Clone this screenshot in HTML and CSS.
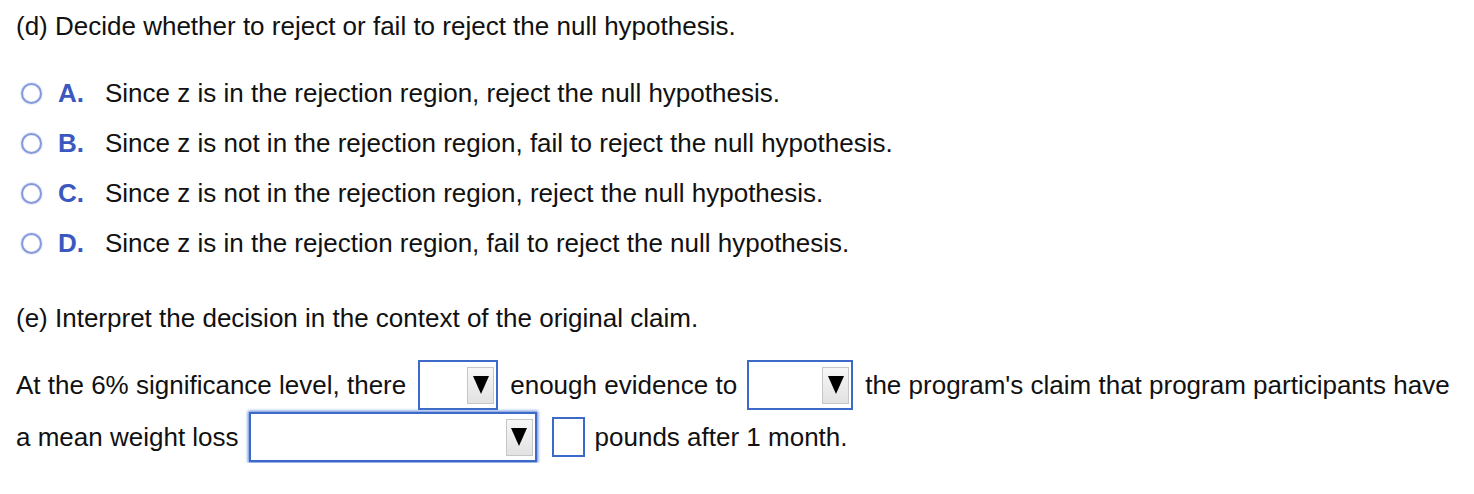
FILE: index.html
```html
<!DOCTYPE html>
<html>
<head>
<meta charset="utf-8">
<link rel="stylesheet" href="styles.css">
</head>
<body>
<div class="page">
  <p class="q">(d) Decide whether to reject or fail to reject the null hypothesis.</p>
  <ul class="options">
    <li class="opt"><span class="radio"></span><span class="letter">A.</span><span class="otext">Since z is in the rejection region, reject the null hypothesis.</span></li>
    <li class="opt"><span class="radio"></span><span class="letter">B.</span><span class="otext">Since z is not in the rejection region, fail to reject the null hypothesis.</span></li>
    <li class="opt"><span class="radio"></span><span class="letter">C.</span><span class="otext">Since z is not in the rejection region, reject the null hypothesis.</span></li>
    <li class="opt"><span class="radio"></span><span class="letter">D.</span><span class="otext">Since z is in the rejection region, fail to reject the null hypothesis.</span></li>
  </ul>
  <p class="q q-e">(e) Interpret the decision in the context of the original claim.</p>
  <div class="answer">
    <div class="line line1">
      <span>At the 6% significance level, there</span>
      <span class="dd dd1"><span class="btn"><span class="tri"></span></span></span>
      <span>enough evidence to</span>
      <span class="dd dd2"><span class="btn"><span class="tri"></span></span></span>
      <span>the program's claim that program participants have</span>
    </div>
    <div class="line line2">
      <span>a mean weight loss</span>
      <span class="dd dd3 focus"><span class="btn"><span class="tri"></span></span></span>
      <span class="tb"></span>
      <span>pounds after 1 month.</span>
    </div>
  </div>
</div>
</body>
</html>
```
FILE: styles.css
```css
html, body {
  margin: 0;
  padding: 0;
  background: #ffffff;
}
body {
  font-family: "Liberation Sans", Arial, sans-serif;
  font-size: 26px;
  color: #111111;
}
.page {
  padding: 11px 0 0 16px;
}
.q {
  margin: 0;
  line-height: 30px;
}
.options {
  list-style: none;
  margin: 27px 0 0 0;
  padding: 0;
}
.opt {
  display: flex;
  align-items: center;
  height: 50px;
}
.radio {
  width: 17px;
  height: 17px;
  border: 2px solid #8599dd;
  border-radius: 50%;
  margin-left: 20px;
  box-shadow: 0 0 2px #aab7ea, inset 0 0 1px #aab7ea;
  flex: none;
}
.letter {
  font-weight: bold;
  color: #3b57c0;
  margin-left: 16px;
  width: 47px;
}
.page .opt .radio {
  margin-left: 5px;
}
.q-e {
  margin-top: 35px;
}
.answer {
  margin-top: 26px;
}
.line {
  display: flex;
  align-items: center;
  height: 52px;
}
.dd {
  display: flex;
  justify-content: flex-end;
  align-items: center;
  box-sizing: border-box;
  height: 50px;
  border: 2px solid #3d6ac8;
  background: #ffffff;
  padding-right: 2px;
  margin: 0 12px;
}
.dd1 { width: 80px; }
.dd2 { width: 106px; margin-left: 10px; }
.dd3 { width: 288px; margin-left: 10px; }
.focus {
  box-shadow: 0 0 3px 1px #5b82d6;
}
.btn {
  box-sizing: border-box;
  display: flex;
  align-items: center;
  justify-content: center;
  width: 27px;
  height: 37px;
  border: 1px solid #c6c6c6;
  background: linear-gradient(#f7f7f7, #e2e2e2);
}
.tri {
  width: 0;
  height: 0;
  border-left: 8px solid transparent;
  border-right: 8px solid transparent;
  border-top: 18px solid #000000;
}
.tb {
  box-sizing: border-box;
  width: 33px;
  height: 40px;
  border: 2px solid #3d6ac8;
  margin: 0 10px 0 3px;
}
```
